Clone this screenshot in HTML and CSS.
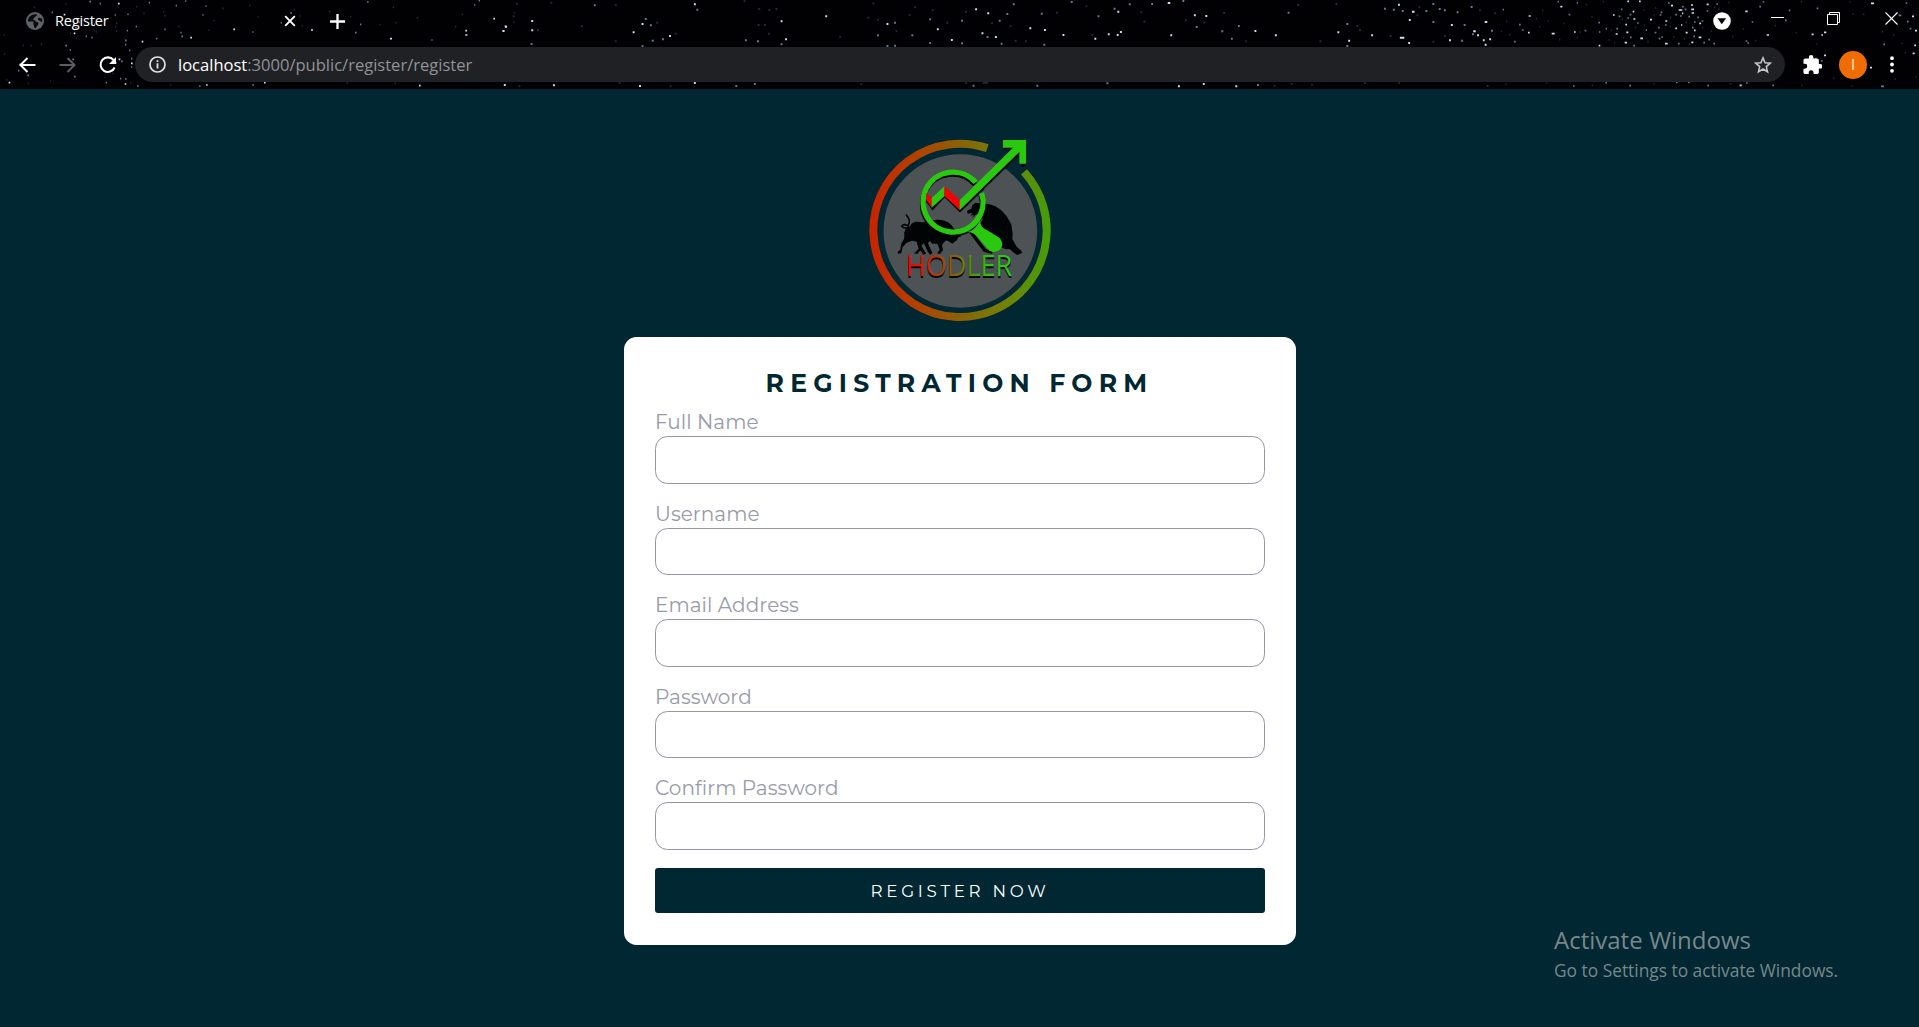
FILE: index.html
```html
<!DOCTYPE html>
<html lang="en">
<head>
<meta charset="utf-8">
<title>Register</title>
<link rel="stylesheet" href="styles.css">
</head>
<body>
<header class="browser">
  <svg class="stars" width="1919" height="89" viewBox="0 0 1919 89" aria-hidden="true">
    <g transform="scale(.33333)">
      <path class="star bright" d="M700 88h5M933 90h6M1170 116h6M1396 92h5M1396 105h6M1480 56h5M1514 79h5M1508 93h5M356 178h5M393 190h5M354 11h5M571 113h5M425 125h5M618 255h5M1257 257h5M221 100h5M191 44h5M26 248h5M374 252h5M792 248h5"/>
      <path class="star mid" d="M155 37h4M268 5h5M299 11h4M382 43h4M380 92h4M407 80h4M446 8h4M527 17h4M555 3h4M616 18h4M607 45h4M493 88h4M541 98h4M544 109h5M468 116h4M871 39h5M757 96h4M842 68h4M1080 73h4M1065 98h5M1101 6h5M1422 15h4M1436 2h4M1294 120h4M236 66h4M225 83h5M257 109h4M274 113h4M282 73h4M196 137h5M209 150h4M217 178h5M214 187h4M194 196h4M347 189h4M363 184h5M375 121h5M375 134h4M387 151h4M393 176h4M393 201h4M375 237h5M360 236h4M317 248h4M222 230h5M82 226h5M54 212h4M58 193h4M597 258h5M757 255h5M411 258h5M344 45h4"/>
      <path class="star dim" d="M11 105h4M12 162h4M68 136h4M91 137h4M122 133h4M101 22h4M196 12h4M210 100h4M227 114h4M280 91h4M287 95h4M348 70h4M345 80h4M348 93h4M408 20h4M430 40h4M489 36h4M493 47h4M535 80h4M625 90h4M640 62h4M667 25h4M747 16h4M772 51h4M881 28h4M897 48h4M905 78h4M987 34h4M1050 50h4M1138 75h4M1186 68h4M1178 22h4M1250 54h4M1365 80h4M1385 43h4M1541 38h4M1540 67h4M18 240h4M83 250h4M150 244h4M337 220h4M390 248h4M510 255h4M1040 248h4M1184 250h4"/>
    </g>
    <g transform="translate(500 0) scale(.63776 .33333)">
      <path class="mstar bright" d="M304 13h3M4 93h3M8 80h3M49 63h3M49 91h3M222 72h3M208 97h3M265 108h3M440 64h3M510 49h3M447 118h3M606 72h3M745 28h3M764 40h3M685 88h3M755 100h3M776 111h3M830 85h3M707 120h3M853 90h3M882 105h3M932 116h3M953 103h3M972 96h3M967 105h3M968 35h3M1047 9h4M1088 46h3M1106 48h3M1051 106h3M1215 106h3M1183 93h3M1330 122h3M1313 97h3M1366 106h3M1411 113h7M1430 35h4M1408 14h3M1488 121h3M1425 60h3M1424 129h3M1544 66h4M1526 94h4M1532 106h3M1551 118h3M1541 121h3M1544 134h3M1491 75h3M6 255h3M83 256h3M218 258h3M304 249h3M1102 252h3M1153 259h3M1063 259h3"/>
      <path class="mstar mid" d="M147 16h3M308 29h3M235 76h3M254 118h3M238 122h3M227 57h3M384 121h3M403 124h3M440 133h3M48 132h3M673 58h3M723 62h3M723 130h3M673 129h3M645 106h3M591 106h3M618 68h3M794 42h3M804 13h3M782 62h3M763 111h3M785 131h3M852 134h3M895 6h3M848 41h3M937 49h3M962 26h3M986 13h3M1021 12h3M1070 3h3M1091 81h3M1157 78h3M1146 116h3M1235 38h3M1131 94h3M1327 72h3M1327 138h3M1386 26h3M1400 29h3M1414 33h3M1451 33h3M1472 27h3M1480 31h3M1462 66h3M1500 37h3M1522 21h3M1511 75h3M1524 103h3M1554 92h3M1507 122h3M606 138h3M618 137h3M222 139h3M1462 12h3M398 252h3M369 258h3M741 257h3M841 257h3M951 250h3M1187 255h3"/>
      <path class="mstar dim" d="M25 11h3M79 8h3M180 16h3M180 124h3M20 49h3M127 79h3M58 91h3M245 68h3M274 101h3M382 3h3M405 27h3M421 30h3M432 27h3M404 75h3M414 75h3M420 101h3M532 110h3M576 53h3M584 10h3M649 22h3M641 45h3M620 94h3M591 59h3M677 31h3M700 68h3M729 35h3M770 70h3M799 79h3M807 122h3M823 124h3M872 38h3M918 19h3M927 104h3M1004 37h3M1009 65h3M1074 61h3M1103 67h3M1134 39h3M1168 124h3M1250 15h3M1310 12h3M1285 124h3M1343 78h3M1347 91h3M1395 108h3M1440 22h3M1437 46h3M1462 125h3M1535 31h3M1559 40h3M1480 108h3M29 259h3M186 248h3M266 259h3M565 253h3M729 248h3M757 248h8M1355 249h3M1408 248h3M1240 252h3M1272 254h3M1213 257h3M1547 258h3"/>
    </g>
    <g transform="translate(1500 0) scale(.33333)">
      <path class="star bright" d="M181 20h6M86 48h6M155 101h9M339 45h5M382 4h5M417 4h5M398 35h5M400 57h6M376 74h5M379 97h6M347 102h6M450 59h6M421 115h8M496 63h6M513 17h6M536 30h11M546 40h4M574 28h8M575 39h7M543 75h4M557 98h6M596 112h8M582 91h5M598 70h5M495 131h8M574 127h6M526 85h5M573 15h6M620 13h6M736 34h7M800 105h7M935 103h6M972 97h7M964 105h5M972 166h6M1113 10h9M1245 92h6M1243 136h5M1238 160h6M1236 49h6M1110 203h6M719 256h6M84 98h5M222 96h5M374 128h7M296 137h5"/>
      <path class="star mid" d="M57 74h5M66 90h5M8 29h4M42 125h5M173 5h4M230 9h4M206 44h5M254 92h5M295 68h5M297 96h4M317 86h4M349 86h5M356 49h5M382 54h5M389 44h5M363 28h4M390 112h5M400 137h5M411 69h5M437 90h4M464 98h5M474 83h5M479 45h5M482 37h5M476 116h5M495 75h5M484 111h5M504 9h5M526 44h5M546 20h5M554 28h5M565 50h5M582 66h5M576 83h5M592 52h5M605 63h5M620 33h5M649 12h5M625 119h5M610 128h5M640 131h5M737 123h5M742 129h5M755 66h5M788 6h5M778 20h5M855 61h5M866 31h5M950 25h5M1196 46h8M1217 9h5M1229 86h5M1221 65h5M945 176h5M963 183h5M1150 133h5M534 131h5M580 109h5M540 48h5M219 258h5M316 248h5M388 257h5M528 247h5M564 247h5M622 257h5M738 249h5M817 256h5M1143 259h9"/>
      <path class="star dim" d="M2 94h4M18 64h4M28 104h4M107 56h4M126 32h4M117 80h4M143 63h4M190 70h4M177 119h4M238 96h4M230 112h4M274 50h4M257 14h4M308 5h4M325 120h4M332 91h4M342 129h4M369 113h4M365 58h4M405 82h4M430 30h4M432 75h4M442 125h4M460 45h4M465 24h4M510 53h4M509 79h4M519 111h4M557 67h4M552 115h4M565 132h4M606 83h4M632 93h4M642 22h4M655 27h4M685 8h4M696 110h4M728 87h4M765 122h4M824 77h4M887 99h4M902 5h4M949 132h4M980 76h4M1048 6h4M1057 42h4M1089 43h4M1145 95h4M1179 105h4M1204 130h4M923 180h4M999 234h4M1054 258h4M1184 238h4M1214 158h4M1247 231h4M16 253h4M138 249h4M275 256h4M460 252h4M690 252h4M903 256h4"/>
    </g>
  </svg>
  <div class="tabstrip">
    <div class="tab">
      <svg class="globe" width="18" height="18" viewBox="0 0 18 18"><circle cx="9" cy="9" r="9" fill="#5f6368"/><path d="M10.500 2.300C12 3 10.300 4.200 9 5C7.500 6 8 7.200 6.500 7.500C8.500 8 9.500 8 9.800 9.500C11 10.500 12.500 9.800 12.500 11.500C12 13.500 10.500 14.500 9.500 16.300C7.500 16.300 8.500 13.500 7.500 12.500C6.800 11 8.200 10.500 7 9.500H1.900C2 5 5.500 1.800 10.500 2.300ZM13.200 5.500L16 6.800C16.400 8 16.300 9 15.800 10.300C14.800 9.500 13.800 8.500 12 8C11.500 6.500 12.300 6 13.200 5.500Z" fill="#0b0b0e"/></svg>
      <span class="tab-title">Register</span>
      <svg class="tab-close" width="12" height="12" viewBox="0 0 12 12"><path d="M1.200 1.200l9.600 9.600M10.800 1.200l-9.600 9.600" stroke="#fff" stroke-width="1.900"/></svg>
    </div>
    <svg class="new-tab" width="15" height="15" viewBox="0 0 15 15"><path d="M7.500 0v15M0 7.500h15" stroke="#fff" stroke-width="2.300"/></svg>
    <div class="window-controls">
      <svg width="18" height="18" viewBox="0 0 18 18"><circle cx="9" cy="9" r="8.800" fill="#fff"/><path d="M4.500 6.200h8.600l-4.300 6z" fill="#000"/></svg>
      <svg class="minimize" width="13" height="13" viewBox="0 0 13 13"><path d="M0 2.500h13" stroke="#fff"/></svg>
      <svg class="restore" width="13" height="13" viewBox="0 0 13 13" fill="none" stroke="#fff"><path d="M.5 2.500h10v10H.5zM2.500 2.500v-2h10v10h-2"/></svg>
      <svg class="close" width="13" height="13" viewBox="0 0 13 13"><path d="M.5.5l12 12M12.500.5l-12 12" stroke="#fff" stroke-width="1.100"/></svg>
    </div>
  </div>
  <div class="toolbar">
    <svg class="back" width="17" height="16" viewBox="0 0 17 16" fill="none" stroke="#fff" stroke-width="2"><path d="M16.500 8H1.800M8.500 1L1.500 8l7 7"/></svg>
    <svg class="forward" width="17" height="16" viewBox="0 0 17 16" fill="none" stroke="#5c5c5f" stroke-width="2"><path d="M.5 8h14.700M8.500 1l7 7-7 7"/></svg>
    <svg class="reload" width="18" height="18" viewBox="0 0 18 18"><path d="M14.500 4A7.300 7.300 0 1 0 15.600 11.500" fill="none" stroke="#fff" stroke-width="2.100"/><path d="M17 1v7h-7z" fill="#fff"/></svg>
    <div class="address">
      <svg width="17" height="17" viewBox="0 0 17 17"><circle cx="8.500" cy="8.500" r="7.500" fill="none" stroke="#e2e3e5" stroke-width="1.700"/><path d="M8.500 7.300v5.300M8.500 4.200v1.900" stroke="#e2e3e5" stroke-width="1.800"/></svg>
      <span class="url"><span class="host">localhost</span>:3000/public/register/register</span>
      <svg class="bookmark" width="18" height="18" viewBox="0 0 18 18"><path d="M9 1.900l2.050 4.850 5.250.45-4 3.450 1.200 5.100L9 13l-4.500 2.750 1.200-5.100-4-3.450 5.250-.45z" fill="none" stroke="#c4c5c7" stroke-width="1.600"/></svg>
    </div>
    <svg class="extensions" width="19" height="19" viewBox="1.500 1 21 21"><path d="M20.500 11H19V7c0-1.100-.9-2-2-2h-4V3.500a2.500 2.500 0 0 0-5 0V5H4c-1.100 0-2 .9-2 2v3.800h1.500a2.700 2.700 0 0 1 0 5.400H2V20c0 1.100.9 2 2 2h3.800v-1.500a2.700 2.700 0 0 1 5.400 0V22H17c1.100 0 2-.9 2-2v-4h1.500a2.500 2.500 0 0 0 0-5z" fill="#fff"/></svg>
    <div class="avatar">I</div>
    <svg class="menu" width="4" height="17" viewBox="0 0 4 17" fill="#fff"><circle cx="2" cy="2.200" r="1.900"/><circle cx="2" cy="8.500" r="1.900"/><circle cx="2" cy="14.800" r="1.900"/></svg>
  </div>
</header>
<main class="page">
  <svg class="logo" width="220" height="210" viewBox="0 0 660 630" role="img" aria-label="Hodler">
    <defs>
      <linearGradient id="ring" gradientUnits="userSpaceOnUse" x1="58" y1="316" x2="602" y2="316"><stop offset="0" stop-color="#c72300"/><stop offset=".25" stop-color="#b34000"/><stop offset=".5" stop-color="#8a6206"/><stop offset=".75" stop-color="#738109"/><stop offset="1" stop-color="#439e0a"/></linearGradient>
      <linearGradient id="word" gradientUnits="userSpaceOnUse" x1="174" y1="0" x2="484" y2="0"><stop offset="0" stop-color="#ee0606"/><stop offset=".15" stop-color="#d81a06"/><stop offset=".36" stop-color="#9c4c06"/><stop offset=".5" stop-color="#7d7006"/><stop offset=".65" stop-color="#45a00a"/><stop offset=".8" stop-color="#2bc810"/></linearGradient>
    </defs>
    <circle cx="331" cy="318" r="230.500" fill="#4d5255"/>
    <path d="M412 69.300A260 260 0 1 0 522 140.700" fill="none" stroke="url(#ring)" stroke-width="24"/>
    <g fill="#010405">
      <path d="M180 306C182 294 194 289 210 291C230 294 244 284 262 284C282 283 304 294 310 308C316 316 324 322 334 334L326 336L320 346L307 356L298 350L289 346L282 352L276 360L279 375L270 387L261 385L269 374L262 356L247 356L239 347L234 355L241 371L248 384L240 389L232 378L222 355L214 362L221 374L229 386L219 389L212 377L206 380L203 387L192 385L206 371L200 350L186 347L170 353L158 366L154 384L145 387L143 380L151 374L153 357L162 342L164 320Z"/>
      <path d="M184 308C174 304 168 313 165 327" fill="none" stroke="#010405" stroke-width="6"/>
      <path d="M185 308C172 311 160 310 155 304C160 296 169 299 174 303C181 292 180 282 168 269" fill="none" stroke="#010405" stroke-width="5"/>
      <path d="M351 258L364 251L367 240L377 233L390 235L398 237L414 236L436 244L454 256L470 274L484 298L488 326L487 342L500 365L514 377L516 384L502 390L492 384L480 373L466 372L452 366L410 334L386 300L398 285L394 271L379 268L366 279L372 269L361 272L368 264L353 266Z"/>
    </g>
    <g fill="none" stroke="#010405">
      <path d="M377 172A90 90 0 1 0 395 204" stroke-width="15" transform="translate(-2 7)"/>
      <path d="M230 223l18 25 36-39 46 46L400 188" stroke-width="11"/>
      <path d="M394 193L512 80M515 120h12M461 68h24" stroke-width="9"/>
      <path d="M362 320l42 56 23 6" stroke-width="10"/>
    </g>
    <path d="M377 172A90 90 0 1 0 395 204" fill="none" stroke="#2bc810" stroke-width="16"/>
    <path d="M228 204l18 15v29l-17-22z" fill="#f00000"/>
    <path d="M245 219l39-36v30l-39 35z" fill="#2bc810"/>
    <path d="M283 183l47 43v30l-47-43z" fill="#ef0505"/>
    <path d="M329 226L489 68h-30V45h69v71h-20V81L329 256z" fill="#2bc810"/>
    <path d="M352 321c20-4 31-17 38-36 1 12 3 18 10 24l46 28c20 17 10 46-17 44l-11-4-39-45c-8-8-15-11-27-12z" fill="#2bc810"/>
    <text class="logo-word" x="167" y="459" textLength="320" lengthAdjust="spacingAndGlyphs" fill="#050607">HODLER</text>
    <text class="logo-word" x="167" y="453" textLength="320" lengthAdjust="spacingAndGlyphs" fill="url(#word)">HODLER</text>
  </svg>
  <form class="card">
    <h1>REGISTRATION FORM</h1>
    <div class="field"><label for="name">Full Name</label><input id="name" type="text"></div>
    <div class="field"><label for="user">Username</label><input id="user" type="text"></div>
    <div class="field"><label for="email">Email Address</label><input id="email" type="email"></div>
    <div class="field"><label for="pass">Password</label><input id="pass" type="password"></div>
    <div class="field"><label for="confirm">Confirm Password</label><input id="confirm" type="password"></div>
    <button type="button">REGISTER NOW</button>
  </form>
  <aside class="watermark">
    <div class="watermark-title">Activate Windows</div>
    <div class="watermark-text">Go to Settings to activate Windows.</div>
  </aside>
</main>
</body>
</html>
```
FILE: styles.css
```css
* { box-sizing: border-box; }
body {
  margin: 0;
  height: 1027px;
  overflow: hidden;
  background: #002732;
  display: flex;
  flex-direction: column;
}
svg { display: block; flex: none; }

.browser {
  position: relative;
  height: 89px;
  background: #010103;
  font-family: "Open Sans", "Noto Sans", sans-serif;
  color: #fff;
}
.stars { position: absolute; left: 0; top: 0; }
.star { fill: none; stroke-width: 5; }
.mstar { fill: none; stroke-width: 6; }
.bright { stroke: #cfdef0; }
.mid { stroke: #66789a; }
.dim { stroke: #25283c; }
.tabstrip, .toolbar { position: relative; display: flex; align-items: center; }
.tabstrip { height: 42px; }
.tab { display: flex; align-items: center; width: 296px; padding-left: 26px; }
.tab-title { margin-left: 11px; font-size: 14.500px; letter-spacing: -0.150px; line-height: 20px; }
.tab-close { margin-left: auto; }
.new-tab { margin-left: 34px; }
.window-controls { display: flex; align-items: center; margin-left: auto; padding-right: 21px; }
.minimize { margin-left: 40px; }
.restore { margin: -5px 0 0 43px; }
.close { margin: -5px 0 0 45px; }
.toolbar { height: 45px; padding-left: 19px; }
.forward { margin-left: 23px; }
.reload { margin-left: 23px; }
.address {
  display: flex;
  align-items: center;
  width: 1650px;
  height: 35px;
  margin-left: 18px;
  padding: 0 13px 0 14px;
  border-radius: 18px;
  background: #202124;
}
.url { margin-left: 12px; font-size: 16.550px; line-height: 24px; color: #8f9296; white-space: nowrap; }
.host { color: #fff; }
.bookmark { margin-left: auto; }
.extensions { margin-left: 18px; }
.avatar {
  display: flex;
  align-items: center;
  justify-content: center;
  width: 28px;
  height: 28px;
  margin-left: 17px;
  border-radius: 50%;
  background: #ef6c00;
  color: #ffe0c4;
  font: 15px Roboto, sans-serif;
}
.menu { margin-left: 23px; }

.page {
  position: relative;
  flex: 1;
  display: flex;
  flex-direction: column;
  align-items: center;
  padding-top: 36px;
}
.logo-word { font: 87px "Open Sans", "Noto Sans", sans-serif; }
.card {
  width: 672px;
  height: 608px;
  margin-top: 2px;
  padding: 28px 31px 0;
  border-radius: 12.500px;
  background: #fff;
  font-family: Montserrat, Inter, "Open Sans", sans-serif;
}
h1 {
  margin: 0 0 6px;
  text-align: center;
  font-size: 25px;
  font-weight: 700;
  line-height: 36px;
  letter-spacing: 6.250px;
  color: #002732;
}
.field { display: flex; flex-direction: column; height: 91.600px; }
label {
  height: 29px;
  padding-left: 0.500px;
  line-height: 31.400px;
  font-size: 20px;
  font-weight: 400;
  font-variant-ligatures: none;
  letter-spacing: 0.060px;
  color: #989ba8;
}
input {
  width: 100%;
  height: 47.500px;
  border: 1px solid #9794a8;
  border-radius: 12.500px;
  background: #fff;
  padding: 0 12px;
}
button {
  display: block;
  width: 100%;
  height: 45px;
  margin-top: 3px;
  padding: 2px 5px 1px 6px;
  border: 0;
  border-radius: 3px;
  background: #002732;
  color: #fff;
  font: 400 16.667px Montserrat, Inter, "Open Sans", sans-serif;
  letter-spacing: 3.750px;
}
.watermark {
  position: absolute;
  left: 1554px;
  top: 835px;
  color: #79878a;
  font-family: "Open Sans", "Noto Sans", sans-serif;
  white-space: nowrap;
}
.watermark-title { font-size: 24px; line-height: 32px; }
.watermark-text { font-size: 17.350px; line-height: 28px; }
```
